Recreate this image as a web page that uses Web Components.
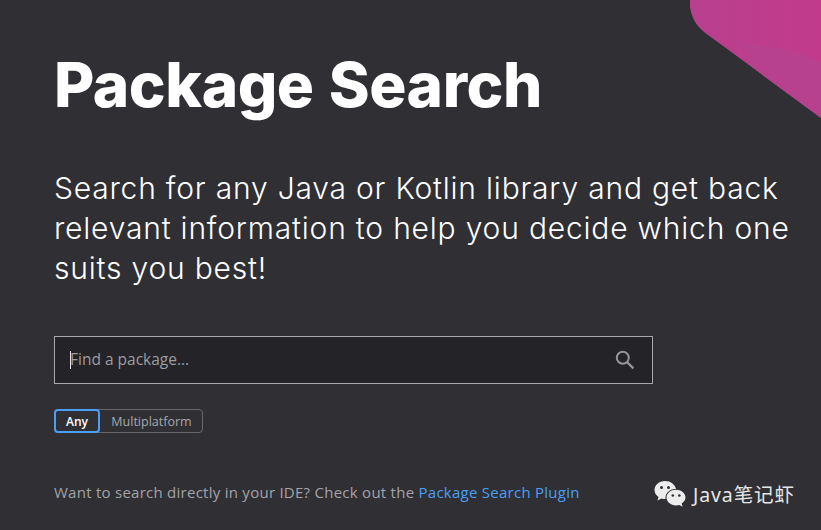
<!DOCTYPE html>
<html>
<head>
<meta charset="utf-8">
<style>
  html, body { margin: 0; height: 100%; background: #2f2f34; }
</style>
</head>
<body>
<search-page>
  <span slot="title">Package Search</span>
  <span slot="lead">Search for any Java or Kotlin library and get back relevant information to help you decide which one suits you best!</span>
</search-page>

<script>
//search box with the fake caret and the magnifier
class SearchBox extends HTMLElement {
  constructor() {
    super();
    this.attachShadow({ mode: 'open' });
    this.shadowRoot.innerHTML = `
      <style>
        :host { display: flex; align-items: center; box-sizing: border-box; width: 599px; height: 48px; padding: 0 17px 0 15px; background: #232328; border: 1px solid #a9a9ab; }
        .caret { width: 1px; height: 18px; background: #e8e8e8; margin-right: -1px; }
        .hint { flex: 1; font: 15.5px "Open Sans", sans-serif; color: #9d9da1; margin-top: -2px; }
        svg { display: block; }
      </style>
      <span class="caret"></span>
      <span class="hint">Find a package...</span>
      <svg width="20" height="20" viewBox="0 0 20 20" fill="none" stroke="#97979b">
        <circle cx="7.8" cy="7.8" r="6" stroke-width="2"/>
        <path d="M12.2 12.2 L18.4 18.4" stroke-width="2.2"/>
      </svg>
    `;
  }
}

//Any / Multiplatform switch
class PlatformToggle extends HTMLElement {
  constructor() {
    super();
    this.attachShadow({ mode: 'open' });
    this.shadowRoot.innerHTML = `
      <style>
        :host { display: inline-flex; height: 24px; font: 12.5px "Open Sans", sans-serif; color: #a6a6aa; border: 1px solid #69696d; border-radius: 4px; box-sizing: border-box; width: 149px; }
        span { display: flex; align-items: center; justify-content: center; box-sizing: border-box; }
        .on { width: 46px; height: 24px; margin: -1px 0 0 -1px; border: 2px solid #4a9ff5; border-radius: 4px; color: #fff; font-size: 12px; font-weight: 600; }
        .off { flex: 1; padding-left: 1px; }
      </style>
      <span class="on">Any</span>
      <span class="off">Multiplatform</span>
    `;
  }
}

//wechat badge at the bottom right
class WechatMark extends HTMLElement {
  constructor() {
    super();
    this.attachShadow({ mode: 'open' });
    this.shadowRoot.innerHTML = `
      <style>
        :host { position: absolute; left: 654px; top: 479px; display: flex; align-items: center; gap: 7px; font: 19.5px "Noto Sans", "Noto Sans CJK SC", sans-serif; letter-spacing: .9px; color: #e6e6e6; }
        svg { display: block; }
      </style>
      <svg width="32" height="28" viewBox="0 0 32 28">
        <path d="M11 1 C5 1 0.500 5 0.500 10 C0.500 13 2 15.300 4.500 17 L3.500 20.500 L7.500 18.500 C9 19 10 19.100 11.500 19 C11 13 16 8.500 22 9 C21 4.500 16.500 1 11 1 Z" fill="#ececec"/>
        <path d="M22 9.800 C16.800 9.800 12.500 13.300 12.500 17.600 C12.500 22 16.800 25.400 22 25.400 C23.200 25.400 24.300 25.200 25.400 24.900 L28.600 26.800 L27.700 23.500 C29.900 22 31.500 20 31.500 17.600 C31.500 13.300 27.200 9.800 22 9.800 Z" fill="#ececec"/>
        <circle cx="7.500" cy="7.500" r="1.500" fill="#2f2f34"/>
        <circle cx="14.500" cy="7.500" r="1.500" fill="#2f2f34"/>
        <circle cx="18.800" cy="15.500" r="1.300" fill="#2f2f34"/>
        <circle cx="25.300" cy="15.500" r="1.300" fill="#2f2f34"/>
      </svg>
      <span>Java笔记虾</span>
    `;
  }
}

class SearchPage extends HTMLElement {
  constructor() {
    super();
    this.attachShadow({ mode: 'open' });
    this.shadowRoot.innerHTML = `
      <style>
        :host { display: flex; flex-direction: column; align-items: flex-start; position: relative; box-sizing: border-box; width: 821px; height: 530px; overflow: hidden; padding: 45px 0 0 54px; color: #fff; font-family: "Open Sans", sans-serif; }
        .corner { position: absolute; top: 0; right: 0; display: block; }
        h1 { margin: 0; font: 800 62px/80px Inter, sans-serif; letter-spacing: -.45px; word-spacing: 2px; white-space: nowrap; }
        p.lead { margin: 43px 0 0; width: 745px; font: 300 30px/40px Inter, sans-serif; letter-spacing: .8px; }
        search-box { margin-top: 48px; }
        platform-toggle { margin-top: 25px; }
        p.foot { margin: 49px 0 0; font-size: 15px; line-height: 20px; letter-spacing: .26px; color: #a3a3a7; }
        p.foot a { color: #4a9ff5; text-decoration: none; }
      </style>
      <svg class="corner" width="131" height="118" viewBox="0 0 131 118">
        <defs>
          <linearGradient id="pink" x1="0" y1="0" x2="1" y2="0">
            <stop offset="0" stop-color="#b8408f"/>
            <stop offset="1" stop-color="#c23a8b"/>
          </linearGradient>
        </defs>
        <path d="M0 0 C-1 12 4 24 14 32 L131 118 L131 0 Z" fill="url(#pink)"/>
        <path d="M50 43 C80 45 105 50 131 62 L131 118 L62 67 Z" fill="#b8418f"/>
      </svg>
      <h1><slot name="title"></slot></h1>
      <p class="lead"><slot name="lead"></slot></p>
      <search-box></search-box>
      <platform-toggle></platform-toggle>
      <p class="foot">Want to search directly in your IDE? Check out the <a href="#">Package Search Plugin</a></p>
      <wechat-mark></wechat-mark>
    `;
  }
}

customElements.define('search-box', SearchBox);
customElements.define('platform-toggle', PlatformToggle);
customElements.define('wechat-mark', WechatMark);
customElements.define('search-page', SearchPage);
</script>
</body>
</html>
